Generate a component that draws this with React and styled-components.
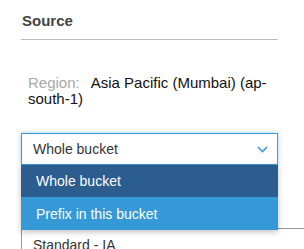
import React from 'react'
import styled, { createGlobalStyle } from 'styled-components'

const Global = createGlobalStyle`
body {
  margin: 0;
  background: #fff;
  font-family: "Liberation Sans", Arial, sans-serif;
  overflow: hidden;
}
`
const Panel = styled.div`
padding: 0 0 0 21px;
width: 257px;
`
const Heading = styled.h3`
margin: 0;
padding: 12px 1px 0;
height: 27px;
font-size: 15px;
font-weight: bold;
color: #444;
border-bottom: 1px solid #bbb;
box-sizing: content-box;
`
const RegionText = styled.p`
margin: 35px 0 0;
padding-left: 7px;
font-size: 15px;
line-height: 16px;
color: #111;
`
const Label = styled.span`
color: #a8a8a8;
margin-right: 11px;
`
const Field = styled.div`
position: relative;
margin-top: 26px;
`
const SelectBox = styled.div`
height: 30px;
border: 1px solid #3a9ad9;
box-shadow: 0 0 5px rgba(58, 154, 217, 0.45);
display: flex;
align-items: center;
justify-content: space-between;
padding: 0 9px 0 11px;
font-size: 14px;
color: #333;
`
const Menu = styled.ul`
position: absolute;
top: 32px;
left: 0;
width: 257px;
margin: 0;
padding: 0;
list-style: none;
box-shadow: 0 2px 6px rgba(0, 0, 0, 0.25);
z-index: 2;
`
const Option = styled.li`
height: ${p => p.$h}px;
display: flex;
align-items: center;
padding-left: 15px;
font-size: 14px;
color: #fff;
background: ${p => (p.$active ? '#2c5d8f' : '#3499d6')};
`
const NextBox = styled.div`
margin-top: 63px;
width: 320px;
height: 40px;
border-top: 1px solid #999;
border-left: 1px solid #999;
padding: 8px 0 0 11px;
font-size: 14px;
color: #333;
`

const Chevron = () => (
  <svg width="11" height="7" viewBox="0 0 11 7">
    <path d="M1 1 L5.5 5.5 L10 1" fill="none" stroke="#3a9ad9" strokeWidth="1.6" />
  </svg>
)

export default function App() {
  return (
    <Panel>
      <Global />
      <Heading>Source</Heading>
      <RegionText>
        <Label>Region:</Label>Asia Pacific (Mumbai) (ap-south-1)
      </RegionText>
      <Field>
        <SelectBox>
          <span>Whole bucket</span>
          <Chevron />
        </SelectBox>
        <Menu>
          <Option $active $h={32}>Whole bucket</Option>
          <Option $h={33}>Prefix in this bucket</Option>
        </Menu>
      </Field>
      <NextBox>Standard - IA</NextBox>
    </Panel>
  )
}
